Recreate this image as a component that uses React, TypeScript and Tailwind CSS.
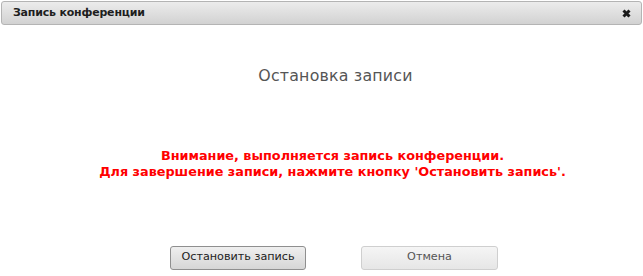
import React from 'react';

const App: React.FC = () => {
  return (
    <div className="w-[643px] h-[276px] bg-white font-['DejaVu_Sans',Verdana,sans-serif] text-[12px] flex flex-col">
      {/* Title bar */}
      <div className="mx-[1px] mt-[1px] h-[24px] flex items-center justify-between rounded-[3px] border border-[#b4b4b4] bg-gradient-to-b from-[#ececec] to-[#d2d2d2] pl-[11px] pr-[10px]">
        <span className="font-bold text-[11px] text-[#1e1e1e] tracking-[-0.2px]">Запись конференции</span>
        <svg width="9" height="9" viewBox="0 0 9 9">
          <path d="M1.5 1.5 L7.5 7.5 M7.5 1.5 L1.5 7.5" stroke="#1a1a1a" strokeWidth="3" strokeLinecap="butt" />
        </svg>
      </div>

      {/* Body */}
      <div className="flex-1 flex flex-col items-center">
        <div className="mt-[39px] ml-[28px] text-[15.8px] text-[#555] tracking-[0.2px]">Остановка записи</div>
        <div className="mt-[60px] ml-[22px] text-center font-bold text-[#ff0000] text-[12.8px] leading-[16px]">
          <div>Внимание, выполняется запись конференции.</div>
          <div>Для завершение записи, нажмите кнопку 'Остановить запись'.</div>
        </div>
        <div className="mt-[66px] ml-[25px] flex gap-[55px]">
          <button className="w-[136px] h-[24px] rounded-[3px] border border-[#8f8f8f] bg-gradient-to-b from-[#efefef] to-[#d6d6d6] text-[11.2px] text-[#222]">
            Остановить запись
          </button>
          <button className="w-[137px] h-[24px] rounded-[3px] border border-[#cfcfcf] bg-gradient-to-b from-[#f5f5f5] to-[#e6e6e6] text-[11.2px] text-[#555]">
            Отмена
          </button>
        </div>
      </div>
    </div>
  );
};

export default App;
